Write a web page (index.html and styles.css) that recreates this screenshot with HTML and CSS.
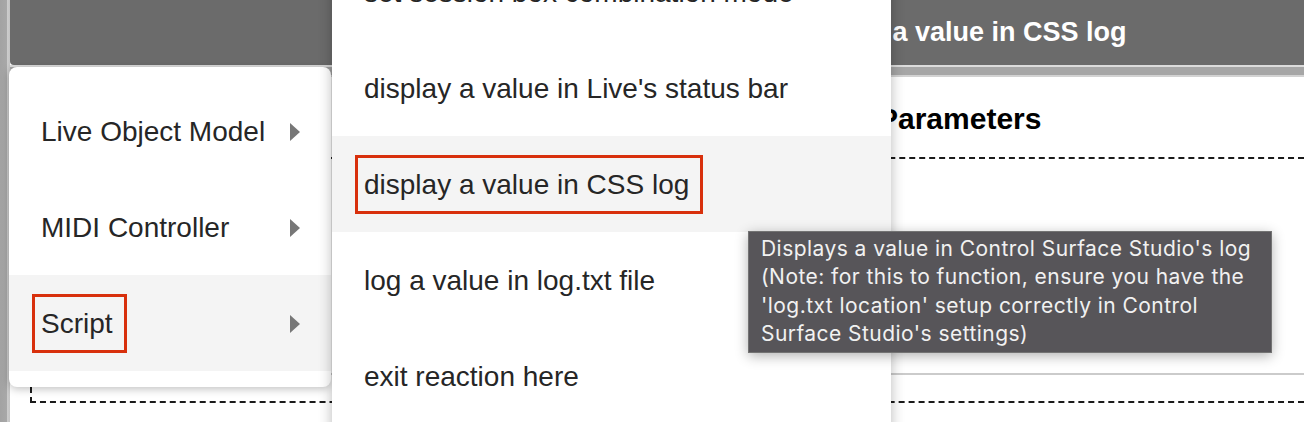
FILE: index.html
```html
<!DOCTYPE html>
<html lang="en">
<head>
    <meta charset="UTF-8">
    <title>Reaction editor</title>
    <link rel="stylesheet" href="styles.css">
</head>
<body>
    <div class="edge"></div>
    <div class="page">
        <div class="titlebar">display a value in CSS log</div>
        <div class="tabline"></div>
        <div class="panel">
            <div class="panel-head">
                <h2>Parameters</h2>
            </div>
            <div class="panel-body">
                <div class="param-row"></div>
            </div>
        </div>
    </div>

    <!-- context menu: first level -->
    <ul class="menu menu-main">
        <li><span>Live Object Model</span><i class="arrow"></i></li>
        <li><span>MIDI Controller</span><i class="arrow"></i></li>
        <li class="active"><span class="marked">Script</span><i class="arrow"></i></li>
    </ul>

    <!-- context menu: Script submenu -->
    <ul class="menu menu-sub">
        <li><span>set session box combination mode</span></li>
        <li><span>display a value in Live's status bar</span></li>
        <li class="active"><span class="marked">display a value in CSS log</span></li>
        <li><span>log a value in log.txt file</span></li>
        <li><span>exit reaction here</span></li>
    </ul>

    <div class="tooltip">
        Displays a value in Control Surface Studio's log<br>
        (Note: for this to function, ensure you have the<br>
        'log.txt location' setup correctly in Control<br>
        Surface Studio's settings)
    </div>
</body>
</html>
```

FILE: styles.css
```css
html, body {
    height: 100%;
}

body {
    margin: 0;
    display: flex;
    overflow: hidden;
    position: relative;
    font-family: "Liberation Sans", Arial, sans-serif;
    background-color: #a5a5a5;
    color: #222;
}

.edge {
    width: 10px;
    background: linear-gradient(90deg, #a3a3a3 0, #a8a8a8 7px, #cdcdcd 7px, #c4c4c4 10px);
}

.page {
    flex: 1;
    background-color: #fff;
}

.titlebar {
    height: 65px;
    display: flex;
    align-items: center;
    padding-left: 782px;
    background-color: #6b6b6b;
    border-bottom-left-radius: 4px;
    color: #fff;
    font-size: 27px;
    font-weight: bold;
}

.tabline {
    height: 8px;
    background-color: #a6a6a6;
    border-top: 2px solid #dcdcdc;
    border-bottom: 2px solid #d2d2d2;
}

.panel {
    margin-left: 20px;
    border-left: 2px dashed #1a1a1a;
    border-bottom: 2px dashed #1a1a1a;
}

.panel-head {
    height: 82px;
    display: flex;
    align-items: center;
    padding: 4px 0 0 846px;
    box-sizing: border-box;
    border-bottom: 2px dashed #1a1a1a;
}

.panel-head h2 {
    margin: 0;
    font-size: 30px;
    color: #000;
}

.panel-body {
    padding-bottom: 26px;
}

.param-row {
    height: 214px;
    border-bottom: 2px solid #cbcbcb;
}

/* menus */

.menu {
    position: absolute;
    margin: 0;
    list-style: none;
    background-color: #fff;
    font-size: 28px;
    color: #262626;
}

.menu li {
    height: 96px;
    display: flex;
    align-items: center;
    justify-content: space-between;
    padding: 2px 31px 0 32px;
    box-sizing: border-box;
}

.menu li.active {
    background-color: #f4f4f4;
}

.menu-main {
    left: 9px;
    top: 67px;
    width: 322px;
    padding: 16px 0;
    box-sizing: border-box;
    border-radius: 8px;
    box-shadow: 0 2px 8px rgba(0, 0, 0, 0.25);
}

.menu-sub {
    left: 332px;
    top: -72px;
    width: 559px;
    padding: 16px 0 40px;
    box-sizing: border-box;
    border-radius: 8px;
    box-shadow: 0 0 14px rgba(0, 0, 0, 0.28);
}

.arrow {
    width: 0;
    height: 0;
    border-left: 10px solid #777;
    border-top: 9px solid transparent;
    border-bottom: 9px solid transparent;
}

/* red annotation frame around the picked items */
.marked {
    position: relative;
}

.marked::after {
    content: "";
    position: absolute;
    top: -14px;
    bottom: -13px;
    left: -9px;
    right: -14px;
    border: 3px solid #d8300c;
}

.tooltip {
    position: absolute;
    left: 748px;
    top: 231px;
    width: 524px;
    box-sizing: border-box;
    padding: 3px 10px 4px 12px;
    background-color: #575559;
    border: 1px solid #737373;
    box-shadow: 0 3px 12px rgba(0, 0, 0, 0.3);
    color: #f1f1f1;
    font-family: Inter, "Liberation Sans", sans-serif;
    font-size: 21px;
    letter-spacing: 0.45px;
    line-height: 28.3px;
    white-space: nowrap;
}
```
